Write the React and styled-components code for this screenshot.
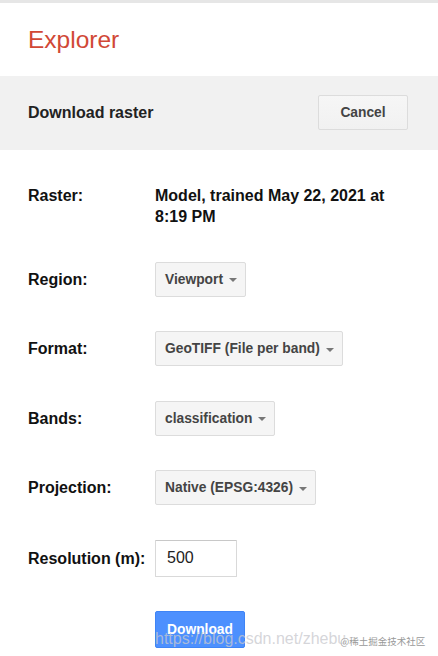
import React from 'react';
import styled, { createGlobalStyle } from 'styled-components';

const GlobalStyle = createGlobalStyle`
  html, body {
    margin: 0;
    padding: 0;
    background: #fff;
    font-family: "Liberation Sans", Arial, sans-serif;
  }
`;

const Page = styled.div`
  position: relative;
  width: 438px;
  height: 656px;
  overflow: hidden;
  background: #fff;
  border-top: 3px solid #e6e6e6;
  box-sizing: border-box;
`;

const Header = styled.header`
  height: 73px;
  display: flex;
  align-items: center;
  padding-left: 28px;
  box-sizing: border-box;
`;

const Title = styled.h1`
  margin: 0;
  font-size: 24.5px;
  font-weight: normal;
  color: #d14836;
`;

const Toolbar = styled.div`
  height: 74px;
  background: #f1f1f1;
  display: flex;
  align-items: center;
  justify-content: space-between;
  padding: 0 30px 0 28px;
  box-sizing: border-box;
`;

const ToolbarTitle = styled.h2`
  margin: 0;
  font-size: 16px;
  font-weight: bold;
  color: #222;
`;

const GreyButton = styled.button`
  width: 90px;
  height: 35px;
  margin-top: -1px;
  background: linear-gradient(#f6f6f6, #f1f1f1);
  border: 1px solid #dcdcdc;
  border-radius: 2px;
  font-family: inherit;
  font-size: 13.8px;
  font-weight: bold;
  color: #444;
  padding: 0;
`;

const Form = styled.div`
  display: flex;
  flex-direction: column;
  gap: 34.5px;
  padding-top: 35px;
`;

const Row = styled.div`
  display: flex;
  align-items: ${p => (p.$top ? 'flex-start' : 'center')};
  padding-left: 28px;
`;

const Label = styled.div`
  width: 127px;
  flex: none;
  font-size: 16px;
  font-weight: bold;
  line-height: 21px;
  color: #111;
`;

const Value = styled.div`
  font-size: 16px;
  font-weight: bold;
  line-height: 21px;
  color: #111;
  width: 250px;
`;

const Select = styled.div`
  height: 35px;
  box-sizing: border-box;
  display: inline-flex;
  align-items: center;
  gap: 6px;
  padding: 0 8px 0 9px;
  background: #f5f5f5;
  border: 1px solid #dcdcdc;
  border-radius: 2px;
  font-size: 13.8px;
  font-weight: bold;
  color: #444;
`;

const Caret = styled.span`
  width: 0;
  height: 0;
  margin-top: 2px;
  border-left: 4.5px solid transparent;
  border-right: 4.5px solid transparent;
  border-top: 4.5px solid #777;
`;

const Input = styled.input`
  width: 82px;
  height: 37px;
  box-sizing: border-box;
  border: 1px solid #d9d9d9;
  border-top-color: #c8c8c8;
  border-radius: 1px;
  padding: 0 0 0 11px;
  font-family: inherit;
  font-size: 16px;
  color: #222;
  outline: none;
`;

const BlueButton = styled.button`
  width: 90px;
  height: 37px;
  background: #4d90fe;
  border: 1px solid #3f84f5;
  border-radius: 2px;
  font-family: inherit;
  font-size: 13.8px;
  font-weight: bold;
  color: #fff;
  padding: 0;
`;

const Watermark = styled.div`
  position: absolute;
  left: 155px;
  top: 627px;
  display: flex;
  align-items: center;
  pointer-events: none;
  white-space: nowrap;
`;

const WatermarkUrl = styled.span`
  font-size: 16px;
  color: rgba(200, 200, 205, 0.75);
`;

const WatermarkTag = styled.span`
  margin-left: -6px;
  margin-top: 3px;
  font-family: "Noto Sans CJK SC", sans-serif;
  font-size: 9.5px;
  color: #999;
  text-shadow: 0 0 2px #fff, 0 0 2px #fff;
`;

const DropdownField = ({ label, value }) => (
  <Row>
    <Label>{label}</Label>
    <Select>
      {value}
      <Caret />
    </Select>
  </Row>
);

const App = () => (
  <Page>
    <GlobalStyle />
    <Header>
      <Title>Explorer</Title>
    </Header>
    <Toolbar>
      <ToolbarTitle>Download raster</ToolbarTitle>
      <GreyButton>Cancel</GreyButton>
    </Toolbar>
    <Form>
      <Row $top>
        <Label>Raster:</Label>
        <Value>Model, trained May 22, 2021 at 8:19 PM</Value>
      </Row>
      <DropdownField label="Region:" value="Viewport" />
      <DropdownField label="Format:" value="GeoTIFF (File per band)" />
      <DropdownField label="Bands:" value="classification" />
      <DropdownField label="Projection:" value="Native (EPSG:4326)" />
      <Row>
        <Label>Resolution (m):</Label>
        <Input defaultValue="500" />
      </Row>
      <Row>
        <Label />
        <BlueButton>Download</BlueButton>
      </Row>
    </Form>
    <Watermark>
      <WatermarkUrl>https://blog.csdn.net/zhebu</WatermarkUrl>
      <WatermarkTag>@稀土掘金技术社区</WatermarkTag>
    </Watermark>
  </Page>
);

export default App;
